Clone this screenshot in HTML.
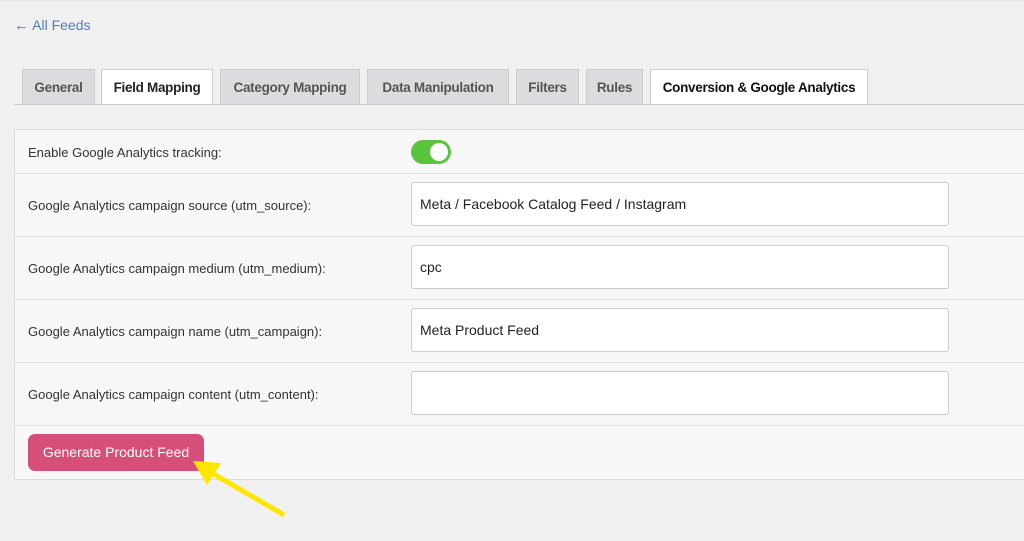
<!DOCTYPE html>
<html><head><style>
body{margin:0;width:1024px;height:541px;background:#f0f0f0;font-family:"Liberation Sans",sans-serif;position:relative;overflow:hidden}
.top{position:absolute;left:0;top:0;width:1024px;height:2px;background:#e8e8e8}
a.back{position:absolute;left:14px;top:17px;color:#4f7fb8;font-size:14px;text-decoration:none}
.tab{position:absolute;top:69px;height:35px;box-sizing:border-box;background:#dcdcde;border:1px solid #ccc;border-bottom:none;font-weight:bold;font-size:13.5px;letter-spacing:-0.3px;color:#555;text-align:center;line-height:36px;white-space:nowrap}
.tab.w{background:#fff;color:#222;height:36px}
.line{position:absolute;left:14px;top:104px;width:1010px;height:1px;background:#ccc}
.panel{position:absolute;left:14px;top:129px;width:1020px;height:351px;box-sizing:border-box;background:#f7f7f7;border:1px solid #ddd}
.row{position:absolute;left:0;width:100%;border-bottom:1px solid #e2e2e2}
.lbl{position:absolute;left:13px;font-size:13px;color:#333}
.inp{position:absolute;left:396px;width:538px;height:44px;box-sizing:border-box;background:#fff;border:1px solid #ccc;border-radius:3px;font-size:14px;color:#222;padding-left:8px;line-height:42px}
.tog{position:absolute;left:396px;top:10px;width:40px;height:24px;border-radius:12px;background:#5ac43e}
.tog::after{content:"";position:absolute;right:3px;top:3px;width:18px;height:18px;border-radius:50%;background:#fff}
.btn{position:absolute;left:13px;top:304px;width:176px;height:37px;background:#d54f79;border-radius:7px;color:#fff;font-size:14px;text-align:center;line-height:37px}
</style></head><body>
<div class="top"></div>
<a class="back"><span style="font-size:15px">←</span> All Feeds</a>
<div class="tab" style="left:22px;width:73px">General</div>
<div class="tab w" style="left:101px;width:112px">Field Mapping</div>
<div class="tab" style="left:220px;width:140px">Category Mapping</div>
<div class="tab" style="left:367px;width:142px">Data Manipulation</div>
<div class="tab" style="left:516px;width:63px">Filters</div>
<div class="tab" style="left:586px;width:57px">Rules</div>
<div class="tab w" style="left:650px;width:218px;color:#111">Conversion &amp; Google Analytics</div>
<div class="line"></div>
<div class="panel">
<div class="row" style="top:0;height:43px"><div class="lbl" style="top:15px">Enable Google Analytics tracking:</div><div class="tog"></div></div>
<div class="row" style="top:43px;height:63px"><div class="lbl" style="top:25px">Google Analytics campaign source (utm_source):</div><div class="inp" style="top:9px">Meta / Facebook Catalog Feed / Instagram</div></div>
<div class="row" style="top:106px;height:63px"><div class="lbl" style="top:25px">Google Analytics campaign medium (utm_medium):</div><div class="inp" style="top:9px">cpc</div></div>
<div class="row" style="top:169px;height:63px"><div class="lbl" style="top:25px">Google Analytics campaign name (utm_campaign):</div><div class="inp" style="top:9px">Meta Product Feed</div></div>
<div class="row" style="top:232px;height:63px"><div class="lbl" style="top:25px">Google Analytics campaign content (utm_content):</div><div class="inp" style="top:9px"></div></div>
<div class="btn">Generate Product Feed</div>
</div>
<svg style="position:absolute;left:0;top:0" width="1024" height="541">
<line x1="284" y1="515" x2="210" y2="472" stroke="#ffe600" stroke-width="5"/>
<polygon points="193,461 221,463 207,485" fill="#ffe600"/>
</svg>
</body></html>
